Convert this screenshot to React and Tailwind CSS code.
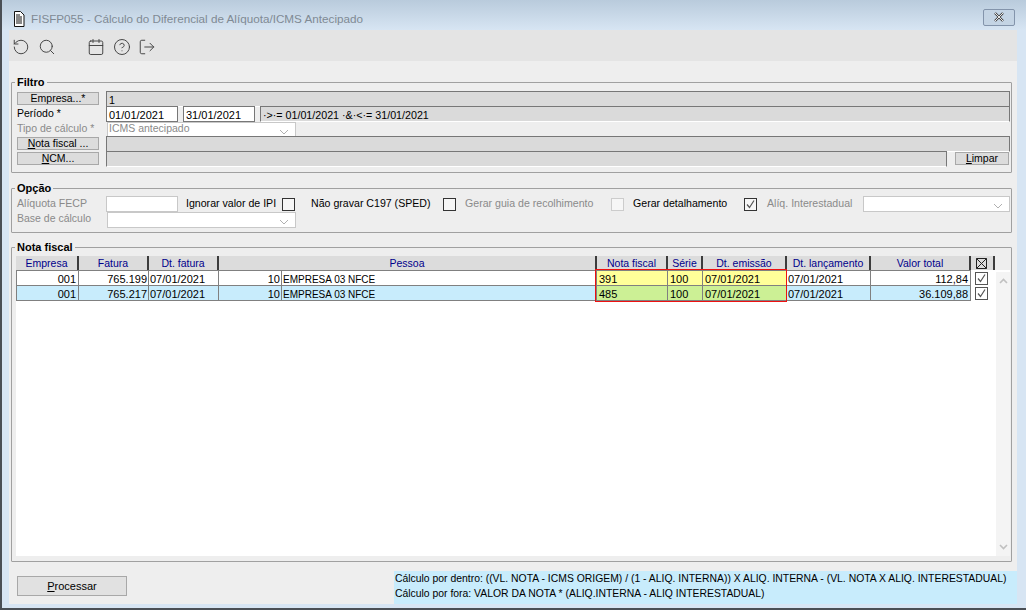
import { RotateCcw, Search, Calendar, CircleHelp, LogOut } from 'lucide-react'

const COLUMNS = [
  { label: 'Empresa', w: 'w-[63px]' },
  { label: 'Fatura', w: 'w-[70px]' },
  { label: 'Dt. fatura', w: 'w-[70px]' },
  { label: 'Pessoa', w: 'w-[378px]' },
  { label: 'Nota fiscal', w: 'w-[71px]' },
  { label: 'Série', w: 'w-[35px]' },
  { label: 'Dt. emissão', w: 'w-[84px]' },
  { label: 'Dt. lançamento', w: 'w-[84px]' },
  { label: 'Valor total', w: 'w-[100px]' },
]

const ROWS = [
  { fatura: '765.199', pessoa: '10', nota: '391', valor: '112,84', bg: 'bg-white', mark: 'bg-[#ffff99]' },
  { fatura: '765.217', pessoa: '10', nota: '485', valor: '36.109,88', bg: 'bg-[#c8ecfc]', mark: 'bg-[#ccf095]' },
]

function Group({ title, className, children }) {
  return (
    <div className={`relative border border-[#a0a0a0] rounded-[1px] ${className}`}>
      <span className="absolute -top-[8px] left-[3px] bg-[#eeeeee] px-[2px] text-[11px] leading-[14px] font-bold text-black">
        {title}
      </span>
      {children}
    </div>
  )
}

function SideButton({ children, className = 'w-[82px]' }) {
  return (
    <div className={`h-[13px] mt-[1px] bg-[#dcdcdc] border border-[#a8a8a8] flex items-center justify-center text-[10.5px] leading-none text-black shrink-0 ${className}`}>
      {children}
    </div>
  )
}

function Field({ children, className = '' }) {
  return (
    <div className={`h-[16px] bg-[#dadada] border border-[#777777] border-b-white px-[2px] text-[10.7px] leading-[16px] text-black overflow-hidden whitespace-nowrap ${className}`}>
      {children}
    </div>
  )
}

function DateInput({ children, className }) {
  return (
    <div className={`h-[16px] bg-white border border-[#777777] px-[2px] text-[11px] leading-[16px] text-black shrink-0 ${className}`}>
      {children}
    </div>
  )
}

function Combo({ children, className }) {
  return (
    <div className={`h-[16px] bg-white border border-[#c8c8c8] flex items-center justify-between pl-[1px] pr-[6px] text-[10.5px] text-[#8a8a8a] shrink-0 ${className}`}>
      <span className="mb-[2px]">{children}</span>
      <svg width="10" height="6" viewBox="0 0 10 6" className="mt-[3px]">
        <path d="M1 1l4 4 4-4" fill="none" stroke="#b0b0b0" strokeWidth="1" />
      </svg>
    </div>
  )
}

function CheckBox({ checked, light, className = '' }) {
  return (
    <div className={`w-[13px] h-[13px] bg-[#f6f6f6] border shrink-0 flex items-center justify-center ${light ? 'border-[#cccccc]' : 'border-[#333333]'} ${className}`}>
      {checked && (
        <svg width="11" height="11" viewBox="0 0 11 11">
          <path d="M2 5.5l2.5 3L9 1.5" fill="none" stroke="#555555" strokeWidth="1.2" />
        </svg>
      )}
    </div>
  )
}

function Cell({ children, className }) {
  return (
    <div className={`h-full border-r border-[#808080] px-[1px] text-[11px] leading-[16px] text-black whitespace-nowrap shrink-0 ${className}`}>
      {children}
    </div>
  )
}

function DocIcon() {
  return (
    <svg width="14" height="16" viewBox="0 0 14 16">
      <path d="M2.5 .5h6l3.5 3.5v11.5h-9.5z" fill="#fff" stroke="#111" />
      <path d="M4 4h4M4 6h6M4 8h6M4 10h6M4 12h6" stroke="#111" />
    </svg>
  )
}

export default function App() {
  return (
    <div className="w-[1026px] h-[610px] overflow-hidden flex flex-col bg-[#d7e5f3] border-l-2 border-b-2 border-[#4a4f55] font-['Liberation_Sans',sans-serif]">
      {/* Title bar */}
      <div className="h-[30px] shrink-0 flex items-center pt-[8px] pl-[10px] pr-[11px] bg-linear-to-b from-[#b9cbdc] to-[#d7e5f3]">
        <DocIcon />
        <span className="ml-[5px] text-[11.7px] text-[#808a94]">
          FISFP055 - Cálculo do Diferencial de Alíquota/ICMS Antecipado
        </span>
        <div className="ml-auto w-[32px] h-[17px] mb-[4px] border border-[#8394ab] rounded-[2px] flex items-center justify-center bg-[#c4d4e4]">
          <svg width="12" height="10" viewBox="0 0 12 10">
            <path d="M2 1l8 8M10 1l-8 8" stroke="#444" strokeWidth="2.4" />
            <path d="M2 1l8 8M10 1l-8 8" stroke="#e8e8e8" strokeWidth="1" />
          </svg>
        </div>
      </div>

      <div className="flex-1 min-h-0 flex flex-col ml-[7px] mr-[9px] mb-[4px]">
        {/* Toolbar */}
        <div className="h-[31px] shrink-0 bg-[#e4e4e4] flex items-center pt-[3px] pl-[3px] text-[#444444]">
          <RotateCcw size={18} strokeWidth={1.3} />
          <Search size={18} strokeWidth={1.3} className="ml-[8px]" />
          <Calendar size={18} strokeWidth={1.3} className="ml-[31px]" />
          <CircleHelp size={18} strokeWidth={1.3} className="ml-[8px]" />
          <LogOut size={18} strokeWidth={1.3} className="ml-[7px]" />
        </div>

        {/* Body */}
        <div className="flex-1 min-h-0 bg-[#eeeeee] flex flex-col pt-[21px] pl-[2px]">
          <div className="mr-[5px] flex flex-col">
            <Group title="Filtro" className="h-[91px] pt-[8px] pl-[5px] pr-[1px]">
              <div className="flex h-[15px]">
                <SideButton>Empresa...*</SideButton>
                <Field className="ml-[7px] flex-1">1</Field>
              </div>
              <div className="flex h-[16px] items-start">
                <span className="w-[89px] shrink-0 text-[10.5px] leading-[15px] text-black">Período *</span>
                <DateInput className="w-[72px]">01/01/2021</DateInput>
                <DateInput className="w-[72px] ml-[5px]">31/01/2021</DateInput>
                <Field className="ml-[5px] flex-1">·&gt;·= 01/01/2021 ·&amp;·&lt;·= 31/01/2021</Field>
              </div>
              <div className="flex h-[14px] items-start">
                <span className="w-[90px] shrink-0 text-[10.5px] leading-[13px] text-[#8a8a8a]">Tipo de cálculo *</span>
                <Combo className="w-[189px] h-[14px]">ICMS antecipado</Combo>
              </div>
              <div className="flex h-[16px]">
                <SideButton><span><u>N</u>ota fiscal ...</span></SideButton>
                <Field className="ml-[7px] flex-1" />
              </div>
              <div className="flex h-[16px] -mt-[1px]">
                <SideButton><span><u>N</u>CM...</span></SideButton>
                <Field className="ml-[7px] w-[841px]" />
                <SideButton className="w-[54px] ml-[8px]"><span><u>L</u>impar</span></SideButton>
              </div>
            </Group>

            <Group title="Opção" className="h-[45px] mt-[15px] pl-[5px] pt-[7px]">
              <div className="flex items-center h-[16px] text-[10.6px]">
                <span className="w-[89px] shrink-0 pb-[1px] text-[#8a8a8a]">Alíquota FECP</span>
                <div className="w-[72px] h-[16px] bg-white border border-[#c8c8c8] shrink-0" />
                <span className="ml-[8px] w-[96px] shrink-0 pb-[1px] text-black">Ignorar valor de IPI</span>
                <CheckBox />
                <span className="ml-[16px] w-[132px] shrink-0 pb-[1px] text-black">Não gravar C197 (SPED)</span>
                <CheckBox />
                <span className="ml-[9px] w-[146px] shrink-0 pb-[1px] text-[#8a8a8a]">Gerar guia de recolhimento</span>
                <CheckBox light />
                <span className="ml-[9px] w-[111px] shrink-0 pb-[1px] text-black">Gerar detalhamento</span>
                <CheckBox checked />
                <span className="ml-[10px] w-[96px] shrink-0 pb-[1px] text-[#8a8a8a]">Alíq. Interestadual</span>
                <Combo className="w-[147px]" />
              </div>
              <div className="flex items-center h-[16px] text-[10.5px]">
                <span className="w-[90px] shrink-0 pb-[2px] text-[#8a8a8a]">Base de cálculo</span>
                <Combo className="w-[189px]" />
              </div>
            </Group>
          </div>

          <div className="mt-[14px] mr-[5px]">
            <Group title="Nota fiscal" className="h-[315px] pt-[8px] pl-[4px] pr-[1px] pb-[5px]">
              <div className="h-full bg-white flex flex-col relative">
                {/* Header */}
                <div className="h-[14px] flex shrink-0 bg-[#eeeeee]">
                  {COLUMNS.map(col => (
                    <div
                      key={col.label}
                      className={`${col.w} shrink-0 h-[14px] bg-[#dcdcdc] border-r-2 border-[#3c3c3c] text-center text-[10.5px] leading-[14px] text-[#00008b]`}
                    >
                      {col.label}
                    </div>
                  ))}
                  <div className="w-[24px] shrink-0 h-[14px] pr-[2px] bg-[#dcdcdc] border-r-2 border-[#3c3c3c] flex items-center justify-center">
                    <svg width="11" height="11" viewBox="0 0 11 11">
                      <path d="M.5.5h10v10H.5zM.5.5l10 10M10.5.5l-10 10" fill="none" stroke="#222" />
                    </svg>
                  </div>
                </div>

                {/* Rows */}
                <div className="border-t border-[#808080] w-[955px]">
                  {ROWS.map(row => (
                    <div key={row.nota} className="h-[15px] flex w-[979px]">
                      <div className={`w-[955px] flex border-b border-l border-[#808080] ${row.bg}`}>
                        <Cell className="w-[62px] text-right pr-[2px]">001</Cell>
                        <Cell className="w-[70px] text-right">{row.fatura}</Cell>
                        <Cell className="w-[70px]">07/01/2021</Cell>
                        <Cell className="w-[63px] text-right">{row.pessoa}</Cell>
                        <Cell className="w-[315px]"><span className="text-[10px]">EMPRESA 03 NFCE</span></Cell>
                        <Cell className={`w-[71px] pl-[2px] ${row.mark}`}>{row.nota}</Cell>
                        <Cell className={`w-[35px] pl-[2px] ${row.mark}`}>100</Cell>
                        <Cell className={`w-[84px] pl-[2px] ${row.mark}`}>07/01/2021</Cell>
                        <Cell className="w-[84px]">07/01/2021</Cell>
                        <Cell className="w-[100px] text-right pr-[2px]">{row.valor}</Cell>
                      </div>
                      <div className="w-[24px] h-full bg-white flex items-center pl-[4px]">
                        <CheckBox checked className="bg-white border-[#555555]" />
                      </div>
                    </div>
                  ))}
                </div>

                {/* Highlight around the marked columns */}
                <div className="absolute z-10 left-[579px] top-[13px] w-[192px] h-[33px] border border-[#ee1111] pointer-events-none" />

                {/* Scrollbar */}
                <div className="absolute right-0 top-[16px] bottom-0 w-[14px] bg-[#f4f4f4] flex flex-col items-center justify-between pt-[6px] pb-[6px]">
                  <svg width="9" height="6" viewBox="0 0 9 6">
                    <path d="M1 5l3.5-3.5L8 5" fill="none" stroke="#c0c0c0" strokeWidth="1.6" />
                  </svg>
                  <svg width="9" height="6" viewBox="0 0 9 6">
                    <path d="M1 1l3.5 3.5L8 1" fill="none" stroke="#c0c0c0" strokeWidth="1.6" />
                  </svg>
                </div>
              </div>
            </Group>
          </div>

          {/* Footer */}
          <div className="flex-1 flex justify-between items-end">
            <div className="mb-[8px] ml-[6px] w-[110px] h-[20px] bg-[#e1e1e1] border border-[#a8a8a8] flex items-center justify-center text-[11px] text-black">
              <span><u>P</u>rocessar</span>
            </div>
            <div className="w-[623px] h-[33px] bg-[#c8ecfc] pl-[1px] text-[10.4px] leading-[15px] text-black whitespace-nowrap">
              <div>Cálculo por dentro: ((VL. NOTA - ICMS ORIGEM) / (1 - ALIQ. INTERNA)) X ALIQ. INTERNA - (VL. NOTA X ALIQ. INTERESTADUAL)</div>
              <div>Cálculo por fora: VALOR DA NOTA * (ALIQ.INTERNA - ALIQ INTERESTADUAL)</div>
            </div>
          </div>
        </div>
      </div>
    </div>
  )
}
